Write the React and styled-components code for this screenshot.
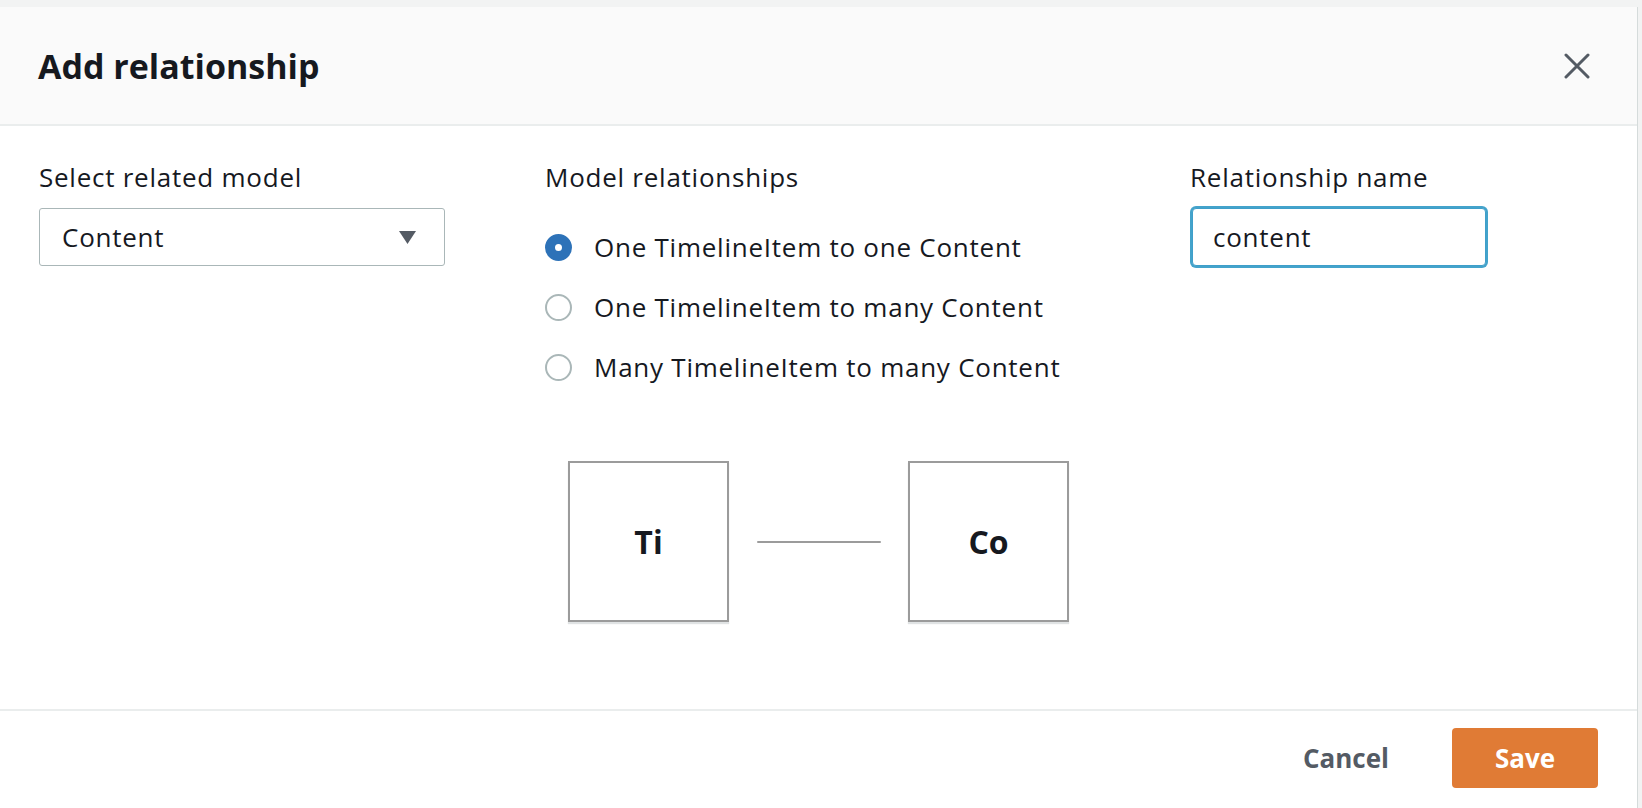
import React from 'react';
import styled, { createGlobalStyle } from 'styled-components';

const GlobalStyle = createGlobalStyle`
	body {
		margin: 0;
		background: #f2f3f3;
		font-family: 'Open Sans', 'Noto Sans', sans-serif;
		color: #16191f;
		overflow: hidden;
	}
	* {
		box-sizing: border-box;
	}
`;

const Page = styled.div`
	padding-top: 7px;
	height: 808px;
`;

const Modal = styled.div`
	width: 1638px;
	background: #ffffff;
	border-right: 1px solid #d5dbdb;
	display: flex;
	flex-direction: column;
`;

const Header = styled.div`
	height: 119px;
	display: flex;
	align-items: center;
	justify-content: space-between;
	padding: 0 47px 0 38px;
	background: #fafafa;
	border-bottom: 2px solid #eaeded;
`;

const Title = styled.h2`
	margin: 0;
	font-size: 34px;
	font-weight: 700;
	color: #16191f;
`;

const CloseButton = styled.button`
	display: flex;
	padding: 0;
	border: none;
	background: none;
	color: #545b64;
	cursor: pointer;
`;

const Body = styled.div`
	height: 583px;
	padding-top: 33px;
`;

const Fields = styled.div`
	display: grid;
	grid-template-columns: 506px 645px 1fr;
	padding-left: 39px;
`;

const Field = styled.div`
	display: flex;
	flex-direction: column;
	align-items: flex-start;
`;

const Label = styled.div`
	font-size: 26px;
	line-height: 36px;
	letter-spacing: 0.75px;
	margin-bottom: 13px;
`;

const SelectBox = styled.div`
	width: 406px;
	height: 58px;
	display: flex;
	align-items: center;
	justify-content: space-between;
	padding: 0 28px 0 22px;
	border: 1px solid #aab7b8;
	border-radius: 3px;
	font-size: 26px;
	letter-spacing: 0.75px;
`;

const RadioList = styled.div`
	margin-top: 9px;
	display: flex;
	flex-direction: column;
`;

const RadioRow = styled.label`
	height: 60px;
	display: flex;
	align-items: center;
	gap: 22px;
	font-size: 26px;
	letter-spacing: 0.75px;
	cursor: pointer;
`;

const RadioDot = styled.span`
	width: 27px;
	height: 27px;
	border-radius: 50%;
	background: #ffffff;
	border: ${(p) => (p.checked ? '10px solid #2d72b8' : '2px solid #aab7b8')};
	flex-shrink: 0;
`;

const TextInput = styled.input`
	width: 294px;
	height: 58px;
	margin-left: 2px;
	padding: 0 20px;
	border: 1px solid #3f9fca;
	border-radius: 4px;
	box-shadow: 0 0 0 2px #44a3cb;
	outline: none;
	font-family: inherit;
	font-size: 26px;
	letter-spacing: 0.75px;
	color: #16191f;
`;

const Diagram = styled.div`
	margin-top: 64px;
	display: flex;
	justify-content: center;
	align-items: center;
`;

const ModelBox = styled.div`
	width: 161px;
	height: 161px;
	display: flex;
	align-items: center;
	justify-content: center;
	border: 2px solid #9b9b9b;
	box-shadow: 0 2px 1px rgba(0, 28, 36, 0.12);
	font-size: 32px;
	font-weight: 700;
	background: #ffffff;
`;

const Connector = styled.div`
	width: 124px;
	height: 2px;
	margin: 0 27px 0 28px;
	background: #9b9b9b;
	border-radius: 1px;
`;

const Footer = styled.div`
	display: flex;
	justify-content: flex-end;
	align-items: center;
	gap: 41px;
	padding: 17px 39px 30px;
	border-top: 2px solid #eaeded;
`;

const Button = styled.button`
	height: 60px;
	padding: 0 22px;
	border: none;
	border-radius: 4px;
	font-family: inherit;
	font-size: 26px;
	font-weight: 700;
	cursor: pointer;
	background: ${(p) => (p.primary ? '#e07b35' : 'transparent')};
	color: ${(p) => (p.primary ? '#ffffff' : '#545b64')};
	width: ${(p) => (p.primary ? '146px' : 'auto')};
`;

const options = [
	'One TimelineItem to one Content',
	'One TimelineItem to many Content',
	'Many TimelineItem to many Content',
];

const App = () => {
	return (
		<Page>
			<GlobalStyle />
			<Modal>
				<Header>
					<Title>Add relationship</Title>
					<CloseButton>
						<svg width="26" height="26" viewBox="0 0 26 26">
							<path
								d="M2 2 L24 24 M24 2 L2 24"
								stroke="currentColor"
								strokeWidth="3"
								strokeLinecap="round"
							/>
						</svg>
					</CloseButton>
				</Header>
				<Body>
					<Fields>
						<Field>
							<Label>Select related model</Label>
							<SelectBox>
								<span>Content</span>
								<svg width="17" height="13" viewBox="0 0 17 13">
									<path d="M0 0 H17 L8.5 13 Z" fill="#545b64" />
								</svg>
							</SelectBox>
						</Field>
						<Field>
							<Label>Model relationships</Label>
							<RadioList>
								{options.map((opt, i) => (
									<RadioRow key={opt}>
										<RadioDot checked={i === 0} />
										{opt}
									</RadioRow>
								))}
							</RadioList>
						</Field>
						<Field>
							<Label>Relationship name</Label>
							<TextInput defaultValue="content" />
						</Field>
					</Fields>
					<Diagram>
						<ModelBox>Ti</ModelBox>
						<Connector />
						<ModelBox>Co</ModelBox>
					</Diagram>
				</Body>
				<Footer>
					<Button>Cancel</Button>
					<Button primary>Save</Button>
				</Footer>
			</Modal>
		</Page>
	);
};

export default App;
